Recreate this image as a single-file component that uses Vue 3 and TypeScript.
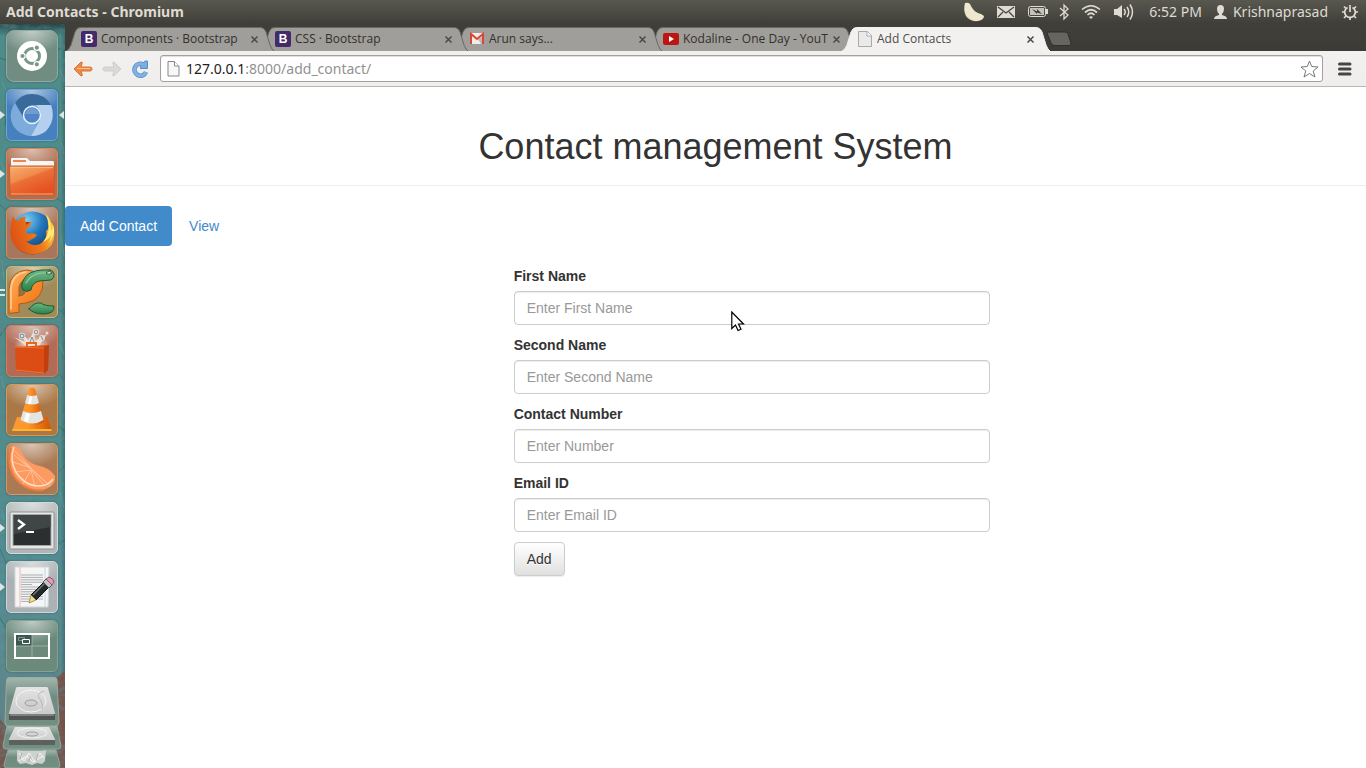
<script setup lang="ts">
import { ref } from 'vue'

interface Tab {
  title: string
  icon: 'bootstrap' | 'gmail' | 'youtube' | 'page'
  active?: boolean
}

interface LauncherItem {
  name: string
  label: string
  running?: 'one' | 'two'
  focused?: boolean
}

interface Field {
  id: string
  label: string
  placeholder: string
  type: string
}

const tabs: Tab[] = [
  { title: 'Components · Bootstrap', icon: 'bootstrap' },
  { title: 'CSS · Bootstrap', icon: 'bootstrap' },
  { title: 'Arun says...', icon: 'gmail' },
  { title: 'Kodaline - One Day - YouT', icon: 'youtube' },
  { title: 'Add Contacts', icon: 'page', active: true },
]

const launcher: LauncherItem[] = [
  { name: 'dash', label: 'Dash home' },
  { name: 'chromium', label: 'Chromium', running: 'one', focused: true },
  { name: 'files', label: 'Files', running: 'one' },
  { name: 'firefox', label: 'Firefox' },
  { name: 'pycharm', label: 'PyCharm', running: 'two' },
  { name: 'software', label: 'Software Center' },
  { name: 'vlc', label: 'VLC' },
  { name: 'clementine', label: 'Clementine' },
  { name: 'terminal', label: 'Terminal', running: 'one' },
  { name: 'gedit', label: 'Text Editor', running: 'one' },
  { name: 'switcher', label: 'Workspace Switcher' },
]

const fields: Field[] = [
  { id: 'first-name', label: 'First Name', placeholder: 'Enter First Name', type: 'text' },
  { id: 'second-name', label: 'Second Name', placeholder: 'Enter Second Name', type: 'text' },
  { id: 'contact-number', label: 'Contact Number', placeholder: 'Enter Number', type: 'text' },
  { id: 'email', label: 'Email ID', placeholder: 'Enter Email ID', type: 'email' },
]

const values = ref<Record<string, string>>({})
const rays = Array.from({ length: 13 }, (_, i) => i)
const textLines = Array.from({ length: 12 }, (_, i) => i)
</script>

<template>
  <div class="desktop">
    <header class="panel">
      <span class="window-title">Add Contacts - Chromium</span>
      <div class="indicators">
        <svg width="22" height="20" viewBox="0 0 22 20"><path d="M2 1 Q5 0 7 2 Q10 9 15 11 Q19 12 21 14 Q21 18 15 19 Q7 20 3 14 Q0 8 2 1Z" fill="#eee8cf" /><path d="M2 8 Q4 16 10 18 Q15 19 19 17 Q13 20 7 17 Q3 14 2 8Z" fill="#d2caa8" /></svg>
        <svg width="18" height="14" viewBox="0 0 18 14"><rect y="1" width="18" height="12" fill="#dfdbd2" /><path d="M1 2 L9 8 L17 2 M1 12 L6 7 M17 12 L12 7" stroke="#47463f" stroke-width="1.300" fill="none" /></svg>
        <svg width="22" height="14" viewBox="0 0 22 14"><rect x="1.500" y="1.500" width="17" height="10" rx="2" fill="none" stroke="#dfdbd2" /><rect x="3" y="3" width="14" height="7" fill="#c5c2b9" /><rect x="19" y="4" width="2" height="5" fill="#dfdbd2" /><path d="M5 4 L10 6.500 V4 L15 9 L10 7.500 V9Z" fill="#383731" /></svg>
        <svg class="bluetooth" width="8" height="18" viewBox="0 0 8 18"><path d="M-1 5 L7 12 L3 16 V2 L7 6 L-1 13" stroke="#dfdbd2" stroke-width="1.300" fill="none" /></svg>
        <svg width="20" height="16" viewBox="0 0 20 16" fill="none" stroke="#dfdbd2" stroke-width="1.500"><path d="M1 5.500 Q10 -2 19 5.500" /><path d="M4 8.500 Q10 3 16 8.500" stroke-width="1.700" /><path d="M6.500 11 Q10 7.500 13.500 11" stroke-width="1.700" /><path d="M8 13 L10 15 L12 13 Q10 11.500 8 13Z" fill="#dfdbd2" stroke="none" /></svg>
        <svg width="22" height="18" viewBox="0 0 22 18" fill="none" stroke="#dfdbd2" stroke-width="1.500"><path d="M1 6 H4 L9 2 V15 L4 12 H1Z" fill="#dfdbd2" stroke="none" /><path d="M11 6 Q13.500 9 11 12 M14 4 Q17.500 9 14 14 M17 1.500 Q22 9 17 16.500" /></svg>
        <time class="clock">6:52 PM</time>
        <span class="user">
          <svg width="13" height="14" viewBox="0 0 13 14"><path d="M3 4 Q3 0 6.500 0 Q10 0 10 4 Q10 7 8 9 V10 Q13 11 13 14 H0 Q0 11 5 10 V9 Q3 7 3 4Z" fill="#dfdbd2" /></svg>
          Krishnaprasad
        </span>
        <svg width="16" height="18" viewBox="0 0 16 18" fill="none" stroke="#dfdbd2"><path d="M5.500 4.500 A5.300 5.300 0 1 0 10.500 4.500" stroke-width="1.700" /><path d="M8 2 V9" stroke-width="1.700" /><path d="M2 3.500 L4 5.500 M14 3.500 L12 5.500 M0 9 H3 M13 9 H16 M2 15 L4 13 M14 15 L12 13 M8 14 V17" stroke-width="1.700" /></svg>
      </div>
    </header>

    <div class="workspace">
      <nav class="launcher" aria-label="Launcher">
        <svg class="wallpaper" viewBox="0 0 65 744" preserveAspectRatio="none" fill="none">
          <filter id="grain" x="0" y="0" width="100%" height="100%"><feTurbulence type="fractalNoise" baseFrequency=".12 .2" numOctaves="4" seed="8" /><feColorMatrix values="0 0 0 0 .1  0 0 0 0 .22  0 0 0 0 .24  1.500 0 0 0 -.6" /></filter>
          <g stroke="#245e62" stroke-width="1" opacity="0.6"><path d="M0 34 L12 38 L16 35 L24 41 M51 12 L59 26 L62 23 M2 90 Q7 93 5 102 M58 175 L65 180 M0 181 L6 186 M59 285 L65 291 M0 312 L5 304 M59 402 L65 408 M0 525 L7 541 M58 520 L65 516 M0 594 L8 607 M60 350 L64 358 M59 448 L64 442" /></g>
          <g stroke="#77b2ac" stroke-width="1" opacity="0.4"><path d="M60 45 L64 58 M2 58 L6 67 M61 118 L64 130 M1 138 L5 150 M61 212 L64 232 M2 236 L4 257 M60 320 L64 331 M1 352 L5 368 M60 468 L64 484 M1 485 L4 496" /></g>
          <path d="M56 654 L65 647 V744 H56Z M0 695 L8 705 V744 H0Z" fill="#7c4c40" opacity="0.85" />
          <rect width="65" height="744" filter="url(#grain)" />
        </svg>
        <button v-for="item in launcher" :key="item.name" class="tile" :class="item.name" type="button" :aria-label="item.label">
          <svg v-if="item.name === 'dash'" viewBox="0 0 52 52">
            <circle cx="26" cy="26" r="15" fill="#fff" /><circle cx="26" cy="26" r="7.500" fill="none" stroke="#7a9687" stroke-width="3" />
            <g fill="#7a9687" stroke="#fff" stroke-width="1.200"><circle cx="16.500" cy="26" r="2.700" /><circle cx="30.800" cy="17.700" r="2.700" /><circle cx="30.800" cy="34.300" r="2.700" /></g>
          </svg>
          <svg v-else-if="item.name === 'chromium'" viewBox="0 0 52 52">
            <circle cx="26" cy="26" r="21" fill="#6c9fd6" /><path d="M9 14 Q15 5 26 5 Q39 5 45 16 H26 Q18 17 17 28Z" fill="#386a9c" /><path d="M45 16 Q50 31 40 42 Q34 47 25 47 L34 31 Q37 22 30 16Z" fill="#b4d0ee" /><path d="M9 14 Q1 27 8 38 Q14 46 25 47 L31 34 Q21 37 17 28Z" fill="#7cabdc" />
            <circle cx="26" cy="26" r="8.500" fill="#4f86c6" stroke="#e7f1fa" stroke-width="1.500" /><path d="M19 25 Q21 18 27 19 Q32 20 33 25Z" fill="#719dd0" />
          </svg>
          <svg v-else-if="item.name === 'files'" viewBox="0 0 52 52">
            <defs><linearGradient id="folder" x1="0" y1="0" x2=".6" y2="1"><stop stop-color="#f6b070" /><stop offset=".45" stop-color="#f08a4c" /><stop offset=".5" stop-color="#eb7038" /><stop offset="1" stop-color="#e5501f" /></linearGradient></defs>
            <path d="M5 11 Q5 10 6 10 H21 L24 13 H47 Q48 13 48 15 V22 H5Z" fill="#f8f5f2" /><path d="M7 12 H20 V14 H7Z" fill="#ec8550" /><path d="M3.500 19 Q3.500 18 4.500 18 H47.500 Q48.500 18 48.500 19 L48 47 H4Z" fill="url(#folder)" stroke="#d05a25" /><path d="M5 19.500 H47 M5 46 H47" stroke="#fbc28b" stroke-width=".8" />
          </svg>
          <svg v-else-if="item.name === 'firefox'" viewBox="0 0 52 52">
            <defs>
              <radialGradient id="globe" cx=".35" cy=".2" r=".85"><stop stop-color="#7fd0f2" /><stop offset=".45" stop-color="#2277bd" /><stop offset="1" stop-color="#103261" /></radialGradient>
              <linearGradient id="fox" x1="0" y1=".6" x2="1" y2=".3"><stop stop-color="#dc4f14" /><stop offset=".6" stop-color="#ee7a1c" /><stop offset="1" stop-color="#ffd23c" /></linearGradient>
            </defs>
            <circle cx="26.500" cy="26" r="21.500" fill="url(#globe)" />
            <path d="M7 9 Q8 13 12 14 Q15 9 20 10 Q18 13 20 15 H25 Q26 18 23 20 L20 22 Q19 26 23 27 Q27 25 31 28 Q29 31 26 32 Q23 35 20 34 Q26 40 34 37 Q42 32 40 24 Q43 23 42 17 Q42 11 39 7 Q43 9 45 15 Q48 18 48 24 Q50 39 37 45 Q24 51 12 42 Q2 33 5 19 Q5 13 7 9Z" fill="url(#fox)" />
            <path d="M40 8 Q43 14 43 20 Q42 30 37 35 Q43 32 45 28 Q45 33 41 38 Q51 28 47 18 Q47 22 45 24 Q45 13 40 8Z" fill="#ffec78" />
            <path d="M20 15 H24 L20 18Z" fill="#a93512" />
          </svg>
          <svg v-else-if="item.name === 'pycharm'" viewBox="0 0 52 52" fill="none" stroke-linecap="round" stroke-linejoin="round">
            <defs>
              <linearGradient id="py-orange" x1="0" y1="0" x2="1" y2="1"><stop stop-color="#ffb466" /><stop offset=".5" stop-color="#f98d2e" /><stop offset="1" stop-color="#e9701a" /></linearGradient>
              <linearGradient id="py-green" x1="0" y1="0" x2="0" y2="1"><stop stop-color="#6db884" /><stop offset="1" stop-color="#2c8049" /></linearGradient>
            </defs>
            <path d="M3 47 V23 Q4 5 21 4 Q33 5 37 14 Q38 34 20 37 L13 38 V46Z" fill="url(#py-orange)" stroke="#b35a14" />
            <path d="M13 30 V21 Q14 16 18 14 Q15 23 19 27 Q17 30 13 30Z" fill="#8d7548" stroke="#b35a14" />
            <path d="M5 43 V23 Q6 8 20 6" stroke="#ffd09b" stroke-width="1.500" />
            <path d="M44 4 H36 Q22 5 18 13 Q14 20 17 24 Q20 27 25 24 Q26 17 33 15 L45 14 Q49 12 48 8 Q47 4 44 4Z" fill="url(#py-green)" stroke="#215833" /><path d="M40 7 H36 Q25 8 20 17" stroke="#90cda2" stroke-width="1.200" /><path d="M41 6 Q44 4 46 7 Q43 9 41 8Z" fill="#dbe7c9" stroke="#20472c" stroke-width=".8" />
            <path d="M23 43 Q28 36 35 37 Q38 40 48 40 Q49 48 37 48 Q28 48 23 43Z" fill="url(#py-green)" stroke="#215833" />
          </svg>
          <svg v-else-if="item.name === 'software'" viewBox="0 0 52 52">
            <defs><radialGradient id="glow"><stop stop-color="#fff4e8" /><stop offset="1" stop-color="#fff4e8" stop-opacity="0" /></radialGradient></defs>
            <ellipse cx="26" cy="20" rx="18" ry="9" fill="url(#glow)" />
            <g fill="#efe5dd" opacity=".9"><path d="M20 21 L8 12 L19 17 L15 7 L23 16 L28 5 L29 16 L41 9 L33 21Z" /><circle cx="16" cy="11" r="3.200" /><circle cx="25" cy="15" r="2.500" /><circle cx="30" cy="7" r="3.200" /><circle cx="36" cy="13" r="3" /><circle cx="41" cy="8" r="1.500" /></g><g fill="none" stroke="#7d8b95"><circle cx="16" cy="11" r="2" stroke="#4f88b0" /><circle cx="30" cy="7" r="1.800" /><path d="M24 17 L26 12 L28 17 M35 11 L37 15" /></g>
            <path d="M9 22 L43 20 L42 45 L38 49 L10 46Z" fill="#dc4c15" /><path d="M38 22 L43 20 L42 45 L38 49Z" fill="#c13f0e" /><path d="M9 22 L38 23 M10 45 L38 48" stroke="#ef7332" /><path d="M21 23 V18 H30 V23" fill="none" stroke="#e8651f" stroke-width="2" />
          </svg>
          <svg v-else-if="item.name === 'vlc'" viewBox="0 0 52 52">
            <defs><linearGradient id="cone"><stop stop-color="#f79a3c" /><stop offset=".4" stop-color="#ff9526" /><stop offset="1" stop-color="#cd5206" /></linearGradient></defs>
            <path d="M11 33 H41 L46 47 H6Z" fill="url(#cone)" /><path d="M6.500 46 H45.500" stroke="#ffb527" stroke-width="2" />
            <path d="M23 5 Q26 2 29 5 L38 38 Q26 46 14 38Z" fill="url(#cone)" />
            <path d="M21.300 11 Q26 13 30.700 11 L33 19 Q26 22 19 19Z M17 27 Q26 31 35 27 L37.500 36 Q26 43 14.500 36Z" fill="#e3e4e4" />
            <path d="M24 12 H26 L25 20 H22Z M20 29 L24 30 L22 38 L18 37Z" fill="#fff" />
          </svg>
          <svg v-else-if="item.name === 'clementine'" viewBox="0 0 52 52">
            <path d="M3 8 Q5 1 10 3 Q14 5 17 12 Q21 19 30 22 Q45 25 49 33 Q50 41 42 45 Q33 50 23 46 Q7 40 3 21Z" fill="#fd9a62" />
            <path v-for="n in rays" :key="n" :d="`M25 25 L${8 + n * 3} ${12 + n * 2.600}`" stroke="#ffbd8f" stroke-width=".8" /><path d="M25 27 L9 29 M25 27 L17 41 M25 27 L29 44 M25 27 L38 42 M25 25 L7 19 M24 24 L9 8" stroke="#ffc9a2" stroke-width=".8" />
            <path d="M8 4 Q3 17 10 29 Q19 43 33 43 Q42 43 47 36" fill="none" stroke="#ffe0c4" stroke-width="1.500" /><path d="M5 5 Q0 22 9 35 Q20 49 37 47" fill="none" stroke="#f0793c" stroke-width="2" />
          </svg>
          <svg v-else-if="item.name === 'terminal'" viewBox="0 0 52 52">
            <rect x="4" y="10" width="44" height="37" rx="1" fill="#e6e7e6" stroke="#8d9191" /><rect x="7" y="12.500" width="38" height="31" fill="#2b2f30" stroke="#a2a6a6" /><path d="M8 13 H44.500 V25 L8 32Z" fill="#404546" /><path d="M12 18 L18 22.500 L12 27" fill="none" stroke="#fff" stroke-width="2.300" /><path d="M20 30 H28" stroke="#fff" stroke-width="2" />
          </svg>
          <svg v-else-if="item.name === 'gedit'" viewBox="0 0 52 52">
            <path d="M9 6 H43 L42 46 H9Z" fill="#f4f5f4" stroke="#d5d7d7" /><path d="M14 6 V46" stroke="#f3b4b4" /><path d="M39 6 V46" stroke="#bcd9ee" /><path v-for="n in textLines" :key="n" :d="`M15 ${14 + n * 2.4} H${n === 4 || n === 11 ? 26 : 37}`" stroke="#a9adaf" stroke-width="1" />
            <path d="M25 34 L39 20 L44 25 L30 39Z" fill="#242829" stroke="#0d1011" /><path d="M27 34 L40 21" stroke="#707578" stroke-width="1.500" /><path d="M25 34 L30 39 L23 42Z" fill="#efe08c" stroke="#8c7424" stroke-width=".7" /><path d="M37 21 L40 18 L46 24 L43 27Z" fill="#c0c4c4" stroke="#515557" /><path d="M40 18 L43 16 Q48 18 48 21 L46 24Z" fill="#e69ab9" stroke="#84576c" />
          </svg>
          <svg v-else viewBox="0 0 52 52">
            <rect x="9" y="14" width="17" height="12" fill="#3d5850" /><path d="M26 15 V38 M9 26 H43" stroke="#9aada4" /><rect x="9" y="14" width="34" height="24" fill="none" stroke="#fff" stroke-width="2" /><path d="M12.500 17.500 H18.500 V20.500 H12.500Z" fill="none" stroke="#84968f" /><path d="M16.500 19.500 H23.500 V23.500 H16.500Z" fill="#3d5850" stroke="#fff" />
          </svg>
          <span v-if="item.running === 'one'" class="pip"></span>
          <span v-if="item.running === 'two'" class="pips"></span>
          <span v-if="item.focused" class="focus-pip"></span>
        </button>
        <button class="stack" type="button" aria-label="Drives and trash">
          <svg viewBox="0 0 60 91">
            <defs>
              <linearGradient id="plate" x1="0" y1="0" x2="0" y2="1"><stop stop-color="#a3b6ad" /><stop offset=".4" stop-color="#6f8c80" /><stop offset="1" stop-color="#738f82" /></linearGradient>
              <linearGradient id="metal" x1="0" y1="0" x2="0" y2="1"><stop stop-color="#e2e3e2" /><stop offset="1" stop-color="#c4c6c5" /></linearGradient>
            </defs>
            <path d="M6 73 H54 L58 88 Q58 91 55 91 H5 Q2 91 2 88Z" fill="url(#plate)" stroke="#8fa79c" />
            <path d="M15 73 L20 74 H40 L44 73 L43 84 L40 87 L35 86 L30 88 L24 86 L18 87 L15 84Z" fill="#cdd2cf" /><path d="M17 76 L22 84 L27 76 L33 85 L38 76 L42 81 M17 84 L25 79 L31 85 L41 79" stroke="#f5f7f6" fill="none" /><path d="M20 76 L18 82 M29 79 L26 85 M36 77 L34 84" stroke="#a7aeaa" />
            <path d="M5 49 H55 L59 69 Q59 72 56 72 H4 Q1 72 1 69Z" fill="url(#plate)" stroke="#8fa79c" />
            <path d="M13 50 H47 L53 62 V68 H7 V62Z" fill="url(#metal)" /><path d="M7 63 H53 V68 H7Z" fill="#5c605e" /><ellipse cx="30" cy="56" rx="15" ry="5" fill="none" stroke="#f2f3f2" /><ellipse cx="30" cy="57" rx="6" ry="2" fill="none" stroke="#989d9a" />
            <path d="M7 0.500 H52 Q55 0.500 55 3 L57 45 Q57 49 53 49 H6 Q3 49 3 45 L4.500 3 Q5 0.500 7 0.500Z" fill="url(#plate)" stroke="#96ada2" />
            <path d="M14 11 Q14 10 16 10 H44 Q46 10 46 11 L53 36 V43 H7 V36Z" fill="url(#metal)" /><path d="M7 37 H53 V43 H7Z" fill="#505453" /><path d="M8 38 H52" stroke="#8d9190" stroke-width="1.500" /><ellipse cx="29" cy="24" rx="15" ry="11" fill="none" stroke="#f3f4f3" /><ellipse cx="29" cy="26" rx="6" ry="3" fill="#cfd1d0" stroke="#9a9e9c" /><path d="M42 14 Q33 17 38 22 Q42 28 40 32" stroke="#b4b7b5" fill="none" />
          </svg>
        </button>
      </nav>

      <section class="browser">
        <div class="tab-strip">
          <div v-for="tab in tabs" :key="tab.title" class="tab" :class="{ active: tab.active }">
            <svg class="tab-shape" viewBox="0 0 208 24" preserveAspectRatio="none"><path d="M0 24 Q3 23 5 18 L9 5 Q11 0 15 0.500 H193 Q198 0 200 5 L204 18 Q206 23 208 24" /></svg>
            <button class="tab-main" type="button">
              <svg v-if="tab.icon === 'bootstrap'" width="16" height="16" viewBox="0 0 16 16"><rect width="16" height="16" rx="2" fill="#432a68" /><text x="8" y="12" text-anchor="middle" font-family="Liberation Sans, sans-serif" font-weight="700" font-size="12" fill="#fff">B</text></svg>
              <svg v-else-if="tab.icon === 'gmail'" width="16" height="16" viewBox="0 0 16 16"><path d="M1 2 H15 V13 H1Z" fill="#f2eee7" /><path d="M9 8 L15 5 V13 H12Z" fill="#bdb9b1" /><path d="M2 13 V3 L8 8 L14 3 V13" fill="none" stroke="#dc4638" stroke-width="2" /></svg>
              <svg v-else-if="tab.icon === 'youtube'" width="16" height="16" viewBox="0 0 16 16"><rect y="2" width="16" height="12" rx="2" fill="#bd1512" /><path d="M6 5 L11 8 L6 11Z" fill="#fff" /></svg>
              <svg v-else width="16" height="16" viewBox="0 0 16 16"><path d="M1.500 .5 H10.500 L14.500 4.500 V15.500 H1.500Z" fill="#eaeaea" stroke="#aaa" /><path d="M10 .5 V5 H14.500" fill="#fff" stroke="#aaa" /></svg>
              <span class="tab-title">{{ tab.title }}</span>
            </button>
            <button class="close" type="button" :aria-label="`Close ${tab.title}`"><svg width="9" height="9" viewBox="0 0 9 9"><path d="M1.500 1.500 L7.500 7.500 M7.500 1.500 L1.500 7.500" stroke="currentColor" stroke-width="1.500" /></svg></button>
          </div>
          <button class="new-tab" type="button" aria-label="New tab"><svg width="26" height="16" viewBox="0 0 26 16"><path d="M1 2 Q1 1 3 1 H19 Q21 1 22 3 L25 12 Q25 14.500 23 14.500 H9 Q6 14.500 5 12Z" fill="#666560" stroke="#302f2b" /></svg></button>
        </div>

        <div class="toolbar">
          <button type="button" aria-label="Back"><svg width="20" height="18" viewBox="0 0 20 18"><path d="M1 9 L8 2 Q10 2 9 4 L8 7 H17 Q19 7 19 9 Q19 11 17 11 H8 L9 14 Q10 16 8 16Z" fill="#ef8a42" stroke="#d8733a" /><path d="M4 8.500 H17" stroke="#ffc28e" /></svg></button>
          <button type="button" aria-label="Forward"><svg width="20" height="18" viewBox="0 0 20 18"><path d="M19 9 L12 2 Q10 2 11 4 L12 7 H3 Q1 7 1 9 Q1 11 3 11 H12 L11 14 Q10 16 12 16Z" fill="#dad9d7" stroke="#cfcecc" /></svg></button>
          <button type="button" aria-label="Reload"><svg width="18" height="18" viewBox="0 0 18 18"><path d="M15 12 A6 6 0 1 1 12.500 4.500" fill="none" stroke="#5590c8" stroke-width="4.500" /><path d="M16.500 1 V8.500 H9.500 V6 L14 1Z" fill="#79ace0" stroke="#5590c8" /><path d="M15 12 A6 6 0 1 1 12.500 4.500" fill="none" stroke="#82b2e3" stroke-width="3" /></svg></button>
          <form class="omnibox" @submit.prevent>
            <svg width="13" height="16" viewBox="0 0 13 16"><path d="M1 .5 H7.500 L12 5 V15 H1Z" fill="#f7f7f7" stroke="#888" /><path d="M7.500 .5 V5 H12" fill="#fff" stroke="#888" /></svg>
            <a class="address" href="#">127.0.0.1<span>:8000/add_contact/</span></a>
            <button class="star" type="button" aria-label="Bookmark this page"><svg width="19" height="18" viewBox="0 0 19 18"><path d="M9.500 1 L11.700 6.500 L18 7 L13.200 11 L15 17 L9.500 13.500 L4 17 L5.800 11 L1 7 L7.300 6.500Z" fill="#fff" stroke="#777" stroke-linejoin="round" /></svg></button>
          </form>
          <button class="menu" type="button" aria-label="Menu"><svg width="14" height="14" viewBox="0 0 14 14"><path d="M1.500 2 H12 M1.500 7 H12 M1.500 12 H12" stroke="#454545" stroke-width="3" stroke-linecap="round" /></svg></button>
        </div>

        <main class="page">
          <div class="page-header"><h1>Contact management System</h1></div>
          <nav class="pills">
            <a class="current" href="#">Add Contact</a>
            <a href="#">View</a>
          </nav>
          <form class="contact-form" @submit.prevent>
            <div v-for="(field, index) in fields" :key="field.id" class="field">
              <label :for="field.id">{{ field.label }}</label>
              <input :id="field.id" v-model="values[field.id]" :type="field.type" :placeholder="field.placeholder" />
              <svg v-if="index === 0" class="pointer" width="14" height="21" viewBox="0 0 14 21"><path d="M.8 1 V17.500 L4.500 14 L7 19.500 L10 18.300 L7.500 13 H12.500Z" fill="#fff" stroke="#000" stroke-width="1.200" /></svg>
            </div>
            <button class="submit" type="submit">Add</button>
          </form>
        </main>
      </section>
    </div>
  </div>
</template>

<style>
body { margin: 0; }
</style>

<style scoped>
* { box-sizing: border-box; }
svg { display: block; flex: none; }
button { margin: 0; padding: 0; border: 0; background: none; font: inherit; color: inherit; }
.desktop { display: flex; flex-direction: column; height: 100vh; overflow: hidden; background: #fff; font-family: "Noto Sans", "Open Sans", sans-serif; }
.panel { display: flex; flex: none; align-items: center; justify-content: space-between; height: 24px; padding: 0 8px 0 6px; background: linear-gradient(#59584f, #3f3e39); color: #dfdbd2; font-size: 14px; line-height: 24px; white-space: nowrap; }
.window-title { font-size: 14px; font-weight: 700; }
.indicators { display: flex; align-items: center; gap: 12px; }
.bluetooth { overflow: visible; }
.clock { margin-left: 2px; }
.user { display: flex; align-items: center; gap: 6px; margin-right: 2px; }
.workspace { display: flex; flex: 1; min-height: 0; }

.launcher { position: relative; display: flex; flex: none; flex-direction: column; align-items: center; gap: 7px; width: 65px; padding: 6px 1px 0 0; overflow: hidden; background: linear-gradient(90deg, transparent 93%, #214d5080), linear-gradient(#26474a, #4c8e8b 12px, #508c89 45%, #508f93 70%, #5a8c92 84%, #647a7e 100%); }
.wallpaper { position: absolute; inset: 0; width: 100%; height: 100%; }
.tile { position: relative; flex: none; width: 52px; height: 52px; border: 1px solid; border-radius: 5px; box-shadow: 0 0 2px #18393b80; background-image: radial-gradient(65% 45% at 50% 0, #ffffff90, #ffffff00); }
.tile svg { width: 52px; height: 52px; margin: -1px; }
.dash { background-color: #718d81; border-color: #95aaa0; border-radius: 8px; }
.chromium { background-color: #4680bd; border-color: #6fa5dd; }
.files { background-color: #ae6f52; border-color: #df8359; }
.firefox { background-color: #a8765a; border-color: #d68b67; }
.pycharm { background-color: #a28b5a; border-color: #d3b572; }
.software { background-color: #b06c56; border-color: #df7a5b; }
.vlc { background-color: #aa7847; border-color: #dc9652; }
.clementine { background-color: #aa7a54; border-color: #dd965f; }
.terminal { background-color: #b0b6b7; border-color: #d4dada; }
.gedit { background-color: #abb1b4; border-color: #ced4d7; }
.switcher { background-color: #6c8a7c; border-color: #84a395; }
.pip, .focus-pip { position: absolute; top: 21px; border: 4px solid transparent; }
.pip { left: -7px; border-left: 5px solid #dce6e5; border-right: 0; }
.focus-pip { right: -7px; border-right: 5px solid #dce6e5; border-left: 0; }
.pips { position: absolute; top: 22px; left: -7px; width: 5px; height: 7px; border: solid #dce6e5; border-width: 2px 0; }
.stack { position: relative; flex: none; width: 60px; margin-top: -2px; }
.stack svg { width: 60px; }

.browser { display: flex; flex: 1; flex-direction: column; min-width: 0; }
.tab-strip { display: flex; flex: none; align-items: flex-end; height: 27px; padding-left: 1px; background: linear-gradient(#403f3a, #3c3b37); }
.tab { position: relative; display: flex; flex: 0 1 208px; align-items: center; min-width: 0; height: 24px; margin-right: -14px; padding: 0 15px; color: #33302a; font-family: "Open Sans", "Noto Sans", sans-serif; font-size: 12px; }
.tab:nth-child(1) { z-index: 4; }
.tab:nth-child(2) { z-index: 3; }
.tab:nth-child(3) { z-index: 2; }
.tab:nth-child(4) { z-index: 1; }
.tab.active { z-index: 5; color: #4c4c4c; }
.tab-shape { position: absolute; inset: 0; width: 100%; height: 100%; fill: #a09e9b; stroke: #6a6864; }
.active .tab-shape { fill: #f2f1f0; stroke: #f2f1f0; }
.tab-main { position: relative; display: flex; flex: 1; align-items: center; gap: 4px; min-width: 0; text-align: left; }
.tab-title { flex: 1; overflow: hidden; white-space: nowrap; line-height: 20px; }
.close { position: relative; flex: none; width: 9px; margin-left: 3px; color: #4b4946; }
.new-tab { width: 26px; height: 16px; margin: 0 0 4px 10px; }

.toolbar { display: flex; flex: none; align-items: center; gap: 9px; height: 36px; padding: 0 14px 0 8px; border-bottom: 1px solid #b9b7b5; background: linear-gradient(#f2f1f0, #efeeed); }
.omnibox { display: flex; flex: 1; align-items: center; gap: 6px; height: 27px; margin-left: 2px; padding: 0 3px 0 6px; border: 1px solid #a3a09d; border-radius: 3px; background: #fff; box-shadow: inset 0 1px 1px #ddd; }
.address { flex: 1; color: #222; font-size: 14px; line-height: 24px; text-decoration: none; }
.address span { color: #929292; }
.menu { margin-left: 6px; }

.page { flex: 1; min-height: 0; overflow: hidden; background: #fff; color: #333; font-family: "Liberation Sans", Arial, sans-serif; font-size: 14px; line-height: 20px; }
.page-header { margin: 40px 0 20px; padding-bottom: 18px; border-bottom: 1px solid #eee; }
h1 { margin: 0; font-size: 36px; font-weight: 400; line-height: 40px; text-align: center; }
.pills { display: flex; gap: 2px; }
.pills a { padding: 10px 15px; border-radius: 4px; color: #428bca; text-decoration: none; }
.pills .current { background: #428bca; color: #fff; }
.contact-form { width: 506px; max-width: 66%; margin: 20px 0 0 calc(100% / 3); padding: 0 15px; }
.field { position: relative; margin-bottom: 10px; }
label { display: block; margin-bottom: 5px; font-weight: 700; }
input { display: block; width: 100%; height: 34px; padding: 6px 12px; border: 1px solid #ccc; border-radius: 4px; background: #fff; box-shadow: inset 0 1px 1px #00000013; color: #555; font: inherit; }
input::placeholder { color: #999; opacity: 1; }
.pointer { position: absolute; top: 45px; left: 217px; }
.submit { padding: 6px 12px; border: 1px solid #ccc; border-radius: 4px; background: linear-gradient(#fff, #e0e0e0); box-shadow: inset 0 1px 0 #ffffff26, 0 1px 1px #00000013; text-shadow: 0 1px 0 #fff; }
</style>
